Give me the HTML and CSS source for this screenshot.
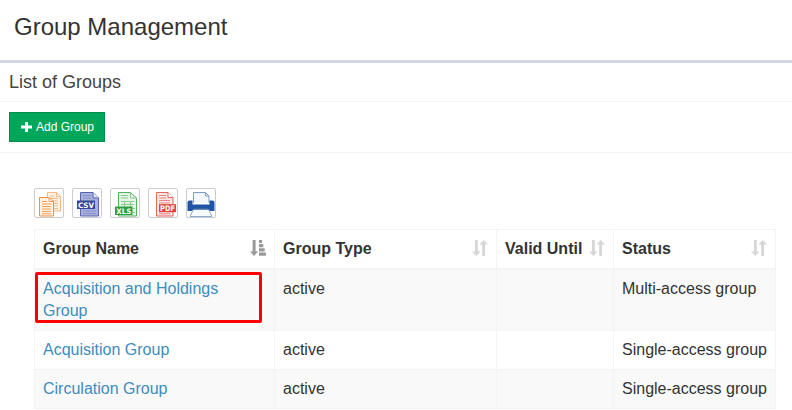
FILE: index.html
```html
<!DOCTYPE html>
<html lang="en">
<head>
<meta charset="utf-8">
<title>Group Management</title>
<link rel="stylesheet" href="styles.css">
</head>
<body>
<svg class="defs" aria-hidden="true">
  <symbol id="sort" viewBox="0 0 16 18">
    <path d="M3 1h2.800v11.500H8.500L4.400 17 0 12.500h3zM10.200 17V5.500H7.500L11.700 1 16 5.500h-3V17z"/>
  </symbol>
  <symbol id="sort-asc" viewBox="0 0 16 18">
    <path d="M2.600 1h3v11.500H8.200L4 17 0 12.500h2.600zM9 1h3v3H9zM9 5h4.300v3.200H9zM9 9.200h5.700v3.200H9zM9 13.500h7v3.300H9z"/>
  </symbol>
</svg>
<header class="page-head"><h1>Group Management</h1></header>
<main>
  <h2>List of Groups</h2>
  <div class="actions">
    <button class="add"><svg width="11" height="10" viewBox="0 0 11 10"><path d="M4 0h3v3.500h4v3H7V10H4V6.500H0v-3h4z" fill="#fff"/></svg><span>Add Group</span></button>
  </div>
  <section class="content">
    <div class="exports">
      <button aria-label="Copy"><svg viewBox="0 0 28 28">
        <path d="M12.500 3.500h9l4 4v14.500h-13z" fill="#fff3e6" stroke="#f6b983"/><path d="M21.500 3.500v4h4M15 7h4M15 9.500h8M15 12h8M15 14.500h8M15 17h8M19 19.500h4" fill="none" stroke="#f6b983"/>
        <path d="M4.500 8.500h9.500l4.500 4v14.500h-14z" fill="#fff0df" stroke="#f09040"/><path d="M14 8.500v4h4.500M7 12.500h5M7 15h9M7 17.500h9M7 20h9M7 22.500h9M7 24.800h9" fill="none" stroke="#f2a05a"/></svg></button>
      <button aria-label="CSV"><svg viewBox="0 0 28 28">
        <path d="M7.500 3.500h12.500l5.500 5.500v18h-18z" fill="#a9b0dc" stroke="#5664b2"/><path d="M20 3.500v5.500h5.500" fill="#e3e6f6" stroke="#5664b2"/><path d="M10 6.500h8M10 9h8M10 22h13M10 24.500h13" stroke="#8791cb"/>
        <path d="M4 11.500h18v8.500H4z" fill="#35459d"/><text class="file-type" x="13" y="18.500" textLength="16" lengthAdjust="spacingAndGlyphs">CSV</text></svg></button>
      <button aria-label="XLS"><svg viewBox="0 0 28 28">
        <path d="M7.500 3.500h12l6 5.500v18h-18z" fill="#e4f4e5" stroke="#4fb35d"/><path d="M19.500 3.500v5.500h6M10 12.500h13M10 15.500h13M22 19.500h2M22 23.500h2M13.500 12v6M19.500 12v6M10 6.500h7M10 9h7" fill="none" stroke="#8bcb93"/>
        <path d="M4 17.500h17.500v8.500H4z" fill="#2f9e3f"/><text class="file-type" x="12.800" y="24.500" textLength="15" lengthAdjust="spacingAndGlyphs">XLS</text></svg></button>
      <button aria-label="PDF"><svg viewBox="0 0 28 28">
        <path d="M7.500 3.500h11.500l5 5v18.500h-16.500z" fill="#fde5e3" stroke="#e4675f"/><path d="M19 3.500v5h5" fill="#fff" stroke="#e4675f"/><path d="M10 6.500h7M10 9h7M10 11.500h11M10 14h11M10 24.800h11" stroke="#e98780"/>
        <path d="M10 15.200h17v8H10z" fill="#e1443b"/><text class="file-type" x="18.600" y="22" textLength="15" lengthAdjust="spacingAndGlyphs">PDF</text></svg></button>
      <button aria-label="Print"><svg viewBox="0 0 28 28">
        <path d="M6.500 14V3.500h12l3.500 3.500v7" fill="#f3f6fb" stroke="#7d9cca"/><path d="M18.500 3.500V7H22" fill="none" stroke="#7d9cca"/>
        <path d="M2.500 11.500h3v4h17v-4h3q2 0 2 2v8.500H.5v-8.500q0-2 2-2z" fill="#1e56a5"/>
        <path d="M6.500 20h15l3.500 7.500H3z" fill="#f5f8fc" stroke="#8eaad3"/><path d="M5.500 20h17" stroke="#174987"/></svg></button>
    </div>
    <table>
      <colgroup><col class="c-name"><col class="c-type"><col class="c-valid"><col class="c-status"></colgroup>
      <thead><tr>
        <th><div>Group Name<svg class="sort active"><use href="#sort-asc"/></svg></div></th>
        <th><div>Group Type<svg class="sort"><use href="#sort"/></svg></div></th>
        <th><div>Valid Until<svg class="sort"><use href="#sort"/></svg></div></th>
        <th><div>Status<svg class="sort"><use href="#sort"/></svg></div></th>
      </tr></thead>
      <tbody>
        <tr><td class="marked"><a>Acquisition and Holdings Group</a></td><td>active</td><td></td><td>Multi-access group</td></tr>
        <tr><td><a>Acquisition Group</a></td><td>active</td><td></td><td>Single-access group</td></tr>
        <tr><td><a>Circulation Group</a></td><td>active</td><td></td><td>Single-access group</td></tr>
      </tbody>
    </table>
  </section>
</main>
</body>
</html>
```

FILE: styles.css
```css
*, *::after { box-sizing: border-box; }
body {
  margin: 0;
  overflow: hidden;
  background: #fff;
  color: #333;
  font: 16px/22px "Liberation Sans", Arial, sans-serif;
}
.defs { display: none; }
h1, h2 { margin: 0; font-weight: 400; }
.page-head {
  height: 63px;
  padding: 12px 14px 0;
  border-bottom: 3px solid #d2d6de;
}
h1 { font-size: 24px; line-height: 30px; }
h2 {
  height: 39px;
  padding: 8px 9px 0;
  border-bottom: 1px solid #f4f4f4;
  color: #444;
  font-size: 18px;
}
.actions {
  height: 51px;
  padding: 10px 9px;
  border-bottom: 1px solid #f4f4f4;
}
.add {
  display: flex;
  align-items: center;
  gap: 4px;
  width: 96px;
  height: 30px;
  padding: 0 0 0 11px;
  border: 1px solid #008d4c;
  background: #00a65a;
  color: #fff;
  font: 12px/18px "Liberation Sans", Arial, sans-serif;
  white-space: nowrap;
}
.content { padding: 35px 16px 0 34px; }
.exports { display: flex; gap: 8px; margin-bottom: 11px; }
.exports button {
  width: 30px;
  height: 30px;
  padding: 0;
  border: 1px solid #ccc;
  border-radius: 2px;
  background: #fff;
}
.exports svg { display: block; width: 28px; height: 28px; }
.file-type {
  fill: #fff;
  font: bold 7.5px "DejaVu Sans", sans-serif;
  text-anchor: middle;
}
table {
  width: 742px;
  table-layout: fixed;
  border-collapse: separate;
  border-spacing: 0;
  border: solid #f4f4f4;
  border-width: 1px 0 0 1px;
}
.c-name { width: 240px; }
.c-type { width: 222px; }
.c-valid { width: 117px; }
.c-status { width: 162px; }
th, td {
  padding: 8px;
  border: solid #f4f4f4;
  border-width: 0 1px 1px 0;
  text-align: left;
  vertical-align: top;
  white-space: nowrap;
}
th { height: 40px; border-bottom-width: 2px; }
th div { display: flex; justify-content: space-between; }
.sort { flex: none; width: 16px; height: 18px; margin-top: 1px; fill: #d6d6d6; }
.sort.active { fill: #999; }
td { height: 39px; }
tbody tr:nth-child(odd) { background: #f9f9f9; }
.marked { position: relative; height: 61px; white-space: normal; }
.marked::after {
  content: "";
  position: absolute;
  top: 2px;
  left: 0;
  width: 227px;
  height: 51px;
  border: 3px solid #f00;
  border-radius: 2px;
}
a { color: #3c8dbc; }
```
